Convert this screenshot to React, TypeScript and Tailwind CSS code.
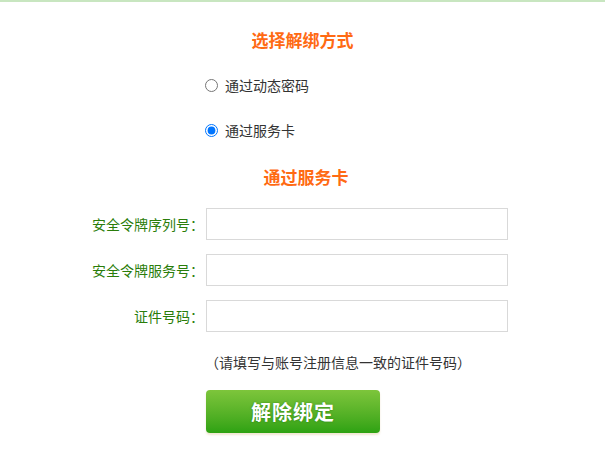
import { useState } from 'react';

const fields = [
  { label: '安全令牌序列号：' },
  { label: '安全令牌服务号：' },
  { label: '证件号码：' },
];

export default function App() {
  const [mode, setMode] = useState<'otp' | 'card'>('card');

  return (
    <div className="w-[605px] h-[459px] bg-white border-t-2 border-[#c8e6c0] font-['Noto_Sans_CJK_SC',sans-serif] text-[14px] text-[#333]">
      <h2 className="pt-[26px] text-center text-[17px] leading-[24px] font-bold text-[#ff6a13]">选择解绑方式</h2>

      <div className="pl-[205px] mt-[23px] flex flex-col gap-[25px]">
        <label className="flex items-center h-[20px] gap-[7px]">
          <input type="radio" name="mode" checked={mode === 'otp'} onChange={() => setMode('otp')} className="w-[13px] h-[13px] m-0" />
          <span>通过动态密码</span>
        </label>
        <label className="flex items-center h-[20px] gap-[7px]">
          <input type="radio" name="mode" checked={mode === 'card'} onChange={() => setMode('card')} className="w-[13px] h-[13px] m-0" />
          <span>通过服务卡</span>
        </label>
      </div>

      <h2 className="mt-[25px] text-center text-[17px] leading-[24px] font-bold text-[#ff6a13] pl-[7px]">通过服务卡</h2>

      <div className="mt-[19px] flex flex-col gap-[14px]">
        {fields.map((f, i) => (
          <div key={i} className="flex items-center">
            <span className="w-[206px] text-right text-[#2a7d0a] pr-[2px]">{f.label}</span>
            <input type="text" className="w-[302px] h-[32px] border border-[#d9d9d9] bg-white outline-none px-2" />
          </div>
        ))}
      </div>

      <p className="mt-[20px] pl-[205px] leading-[20px]">（请填写与账号注册信息一致的证件号码）</p>

      <div className="pl-[206px] mt-[18px]">
        <button className="w-[174px] h-[43px] rounded-[4px] bg-gradient-to-b from-[#7dc53b] to-[#2ca212] text-white text-[20px] font-bold tracking-[1px] shadow-[0_2px_2px_rgba(200,160,80,0.25)] [text-shadow:0_0_2px_rgba(0,80,0,0.5)]">
          解除绑定
        </button>
      </div>
    </div>
  );
}
